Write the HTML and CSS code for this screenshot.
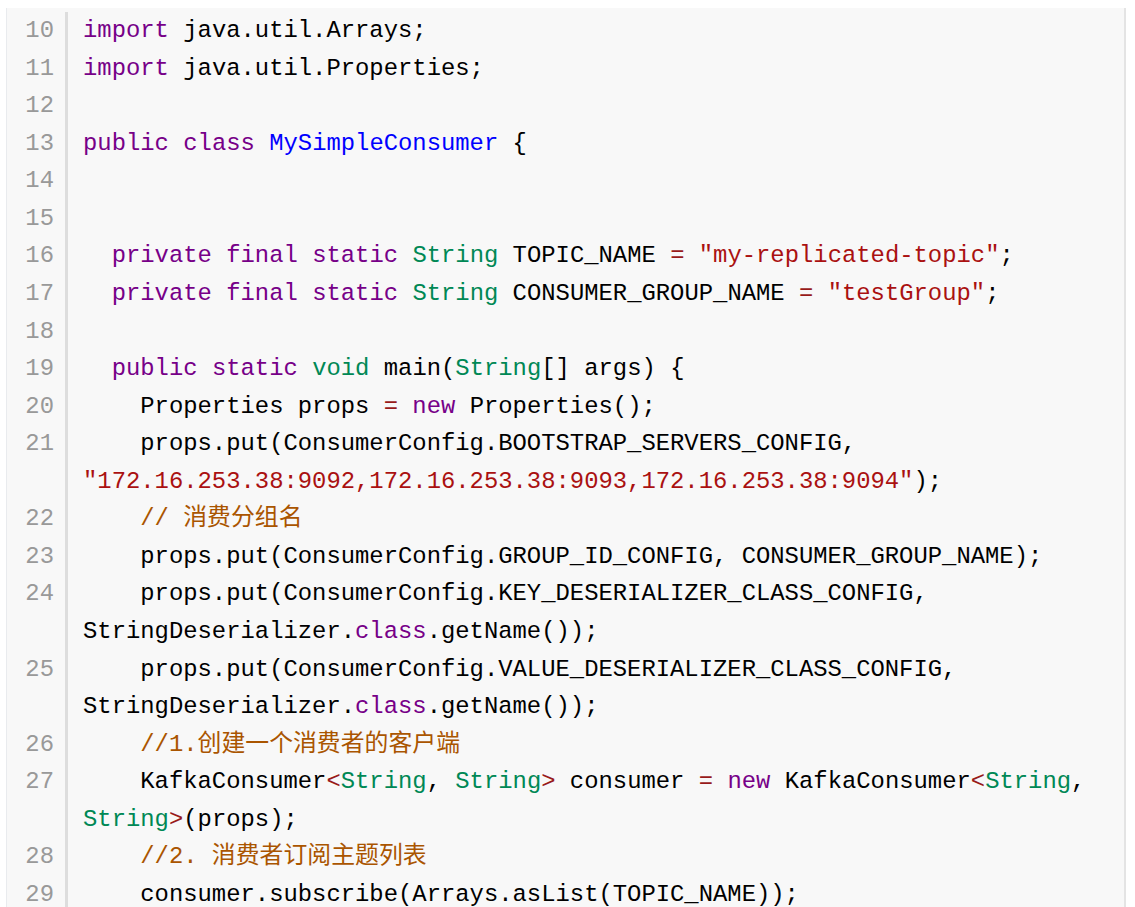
FILE: index.html
```html
<!DOCTYPE html>
<html>
<head>
<meta charset="utf-8">
<link rel="stylesheet" href="styles.css">
</head>
<body>
<div class="code">
<div class="ln">10</div><div class="src"><span class="kw">import</span> java.util.Arrays;</div>
<div class="ln">11</div><div class="src"><span class="kw">import</span> java.util.Properties;</div>
<div class="ln">12</div><div class="src"> </div>
<div class="ln">13</div><div class="src"><span class="kw">public</span> <span class="kw">class</span> <span class="def">MySimpleConsumer</span> {</div>
<div class="ln">14</div><div class="src"> </div>
<div class="ln">15</div><div class="src"> </div>
<div class="ln">16</div><div class="src">  <span class="kw">private</span> <span class="kw">final</span> <span class="kw">static</span> <span class="ty">String</span> TOPIC_NAME <span class="op">=</span> <span class="str">"my-replicated-topic"</span>;</div>
<div class="ln">17</div><div class="src">  <span class="kw">private</span> <span class="kw">final</span> <span class="kw">static</span> <span class="ty">String</span> CONSUMER_GROUP_NAME <span class="op">=</span> <span class="str">"testGroup"</span>;</div>
<div class="ln">18</div><div class="src"> </div>
<div class="ln">19</div><div class="src">  <span class="kw">public</span> <span class="kw">static</span> <span class="ty">void</span> main(<span class="ty">String</span>[] args) {</div>
<div class="ln">20</div><div class="src">    Properties props <span class="op">=</span> <span class="kw">new</span> Properties();</div>
<div class="ln">21</div><div class="src">    props.put(ConsumerConfig.BOOTSTRAP_SERVERS_CONFIG,<br><span class="str">"172.16.253.38:9092,172.16.253.38:9093,172.16.253.38:9094"</span>);</div>
<div class="ln">22</div><div class="src">    <span class="cm">// 消费分组名</span></div>
<div class="ln">23</div><div class="src">    props.put(ConsumerConfig.GROUP_ID_CONFIG, CONSUMER_GROUP_NAME);</div>
<div class="ln">24</div><div class="src">    props.put(ConsumerConfig.KEY_DESERIALIZER_CLASS_CONFIG,<br>StringDeserializer.<span class="kw">class</span>.getName());</div>
<div class="ln">25</div><div class="src">    props.put(ConsumerConfig.VALUE_DESERIALIZER_CLASS_CONFIG,<br>StringDeserializer.<span class="kw">class</span>.getName());</div>
<div class="ln">26</div><div class="src">    <span class="cm">//1.创建一个消费者的客户端</span></div>
<div class="ln">27</div><div class="src">    KafkaConsumer<span class="op">&lt;</span><span class="ty">String</span>, <span class="ty">String</span><span class="op">&gt;</span> consumer <span class="op">=</span> <span class="kw">new</span> KafkaConsumer<span class="op">&lt;</span><span class="ty">String</span>,<br><span class="ty">String</span><span class="op">&gt;</span>(props);</div>
<div class="ln">28</div><div class="src">    <span class="cm">//2. 消费者订阅主题列表</span></div>
<div class="ln">29</div><div class="src">    consumer.subscribe(Arrays.asList(TOPIC_NAME));</div>
</div>
</body>
</html>
```
FILE: styles.css
```css
html, body {
  margin: 0;
  padding: 0;
  background: #ffffff;
}
body {
  padding: 8px 9px 0 6px;
  overflow: hidden;
  height: 907px;
  box-sizing: border-box;
}
.code {
  display: grid;
  grid-template-columns: 61px 1fr;
  background: #f8f8f8;
  border-left: 1px solid #e9ebee;
  border-right: 2px solid #e4e4e4;
  padding-top: 4px;
  padding-bottom: 20px;
  font-family: "Liberation Mono", "Noto Sans CJK SC", monospace;
  font-size: 23.87px;
  line-height: 37.57px;
  color: #000;
}
.ln {
  color: #999;
  text-align: right;
  padding-right: 11px;
  border-right: 3px solid #dddddd;
  white-space: pre;
}
.src {
  padding-left: 15px;
  white-space: pre;
}
.kw { color: #770088; }
.ty { color: #008855; }
.def { color: #0000ff; }
.str { color: #aa1111; }
.op { color: #981a1a; }
.cm { color: #aa5500; }
```
